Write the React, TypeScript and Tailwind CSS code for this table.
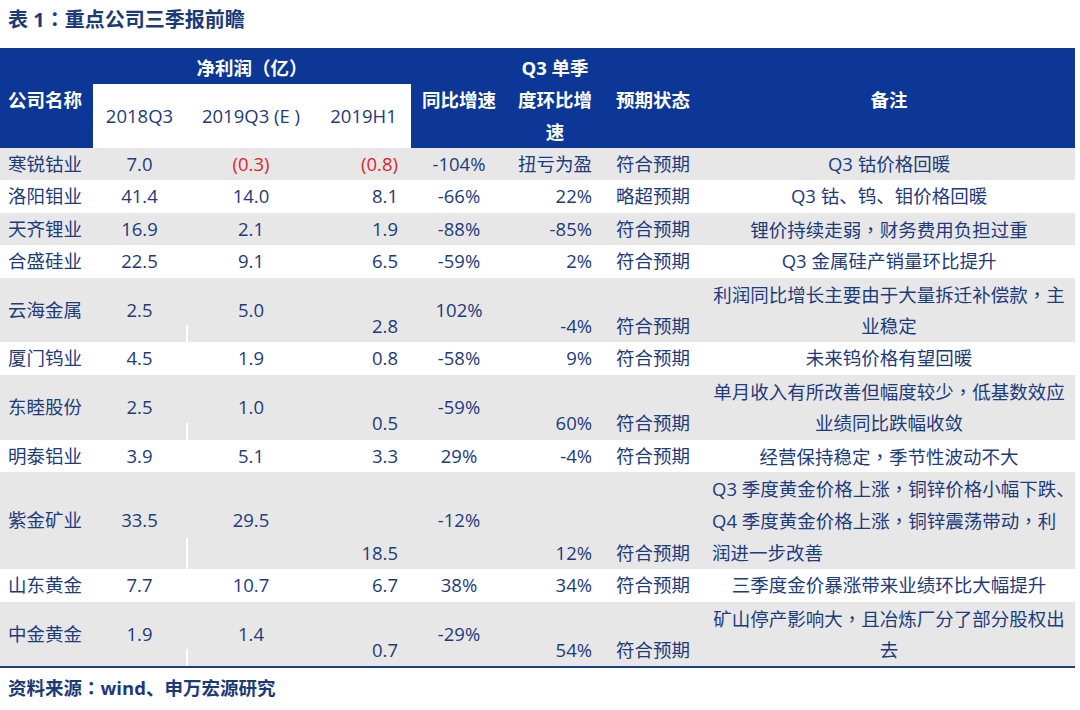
type Row = {
  name: string;
  a: string;
  b: string;
  c: string;
  yoy: string;
  qoq: string;
  status: string;
  remark: string[];
  lines: number;
  red?: boolean;
  left?: boolean;
};

const rows: Row[] = [
  { name: "寒锐钴业", a: "7.0", b: "(0.3)", c: "(0.8)", yoy: "-104%", qoq: "扭亏为盈", status: "符合预期", remark: ["Q3 钴价格回暖"], lines: 1, red: true },
  { name: "洛阳钼业", a: "41.4", b: "14.0", c: "8.1", yoy: "-66%", qoq: "22%", status: "略超预期", remark: ["Q3 钴、钨、钼价格回暖"], lines: 1 },
  { name: "天齐锂业", a: "16.9", b: "2.1", c: "1.9", yoy: "-88%", qoq: "-85%", status: "符合预期", remark: ["锂价持续走弱，财务费用负担过重"], lines: 1 },
  { name: "合盛硅业", a: "22.5", b: "9.1", c: "6.5", yoy: "-59%", qoq: "2%", status: "符合预期", remark: ["Q3 金属硅产销量环比提升"], lines: 1 },
  { name: "云海金属", a: "2.5", b: "5.0", c: "2.8", yoy: "102%", qoq: "-4%", status: "符合预期", remark: ["利润同比增长主要由于大量拆迁补偿款，主", "业稳定"], lines: 2 },
  { name: "厦门钨业", a: "4.5", b: "1.9", c: "0.8", yoy: "-58%", qoq: "9%", status: "符合预期", remark: ["未来钨价格有望回暖"], lines: 1 },
  { name: "东睦股份", a: "2.5", b: "1.0", c: "0.5", yoy: "-59%", qoq: "60%", status: "符合预期", remark: ["单月收入有所改善但幅度较少，低基数效应", "业绩同比跌幅收敛"], lines: 2 },
  { name: "明泰铝业", a: "3.9", b: "5.1", c: "3.3", yoy: "29%", qoq: "-4%", status: "符合预期", remark: ["经营保持稳定，季节性波动不大"], lines: 1 },
  { name: "紫金矿业", a: "33.5", b: "29.5", c: "18.5", yoy: "-12%", qoq: "12%", status: "符合预期", remark: ["Q3 季度黄金价格上涨，铜锌价格小幅下跌、", "Q4 季度黄金价格上涨，铜锌震荡带动，利", "润进一步改善"], lines: 3, left: true },
  { name: "山东黄金", a: "7.7", b: "10.7", c: "6.7", yoy: "38%", qoq: "34%", status: "符合预期", remark: ["三季度金价暴涨带来业绩环比大幅提升"], lines: 1 },
  { name: "中金黄金", a: "1.9", b: "1.4", c: "0.7", yoy: "-29%", qoq: "54%", status: "符合预期", remark: ["矿山停产影响大，且冶炼厂分了部分股权出", "去"], lines: 2 },
];

const heights: Record<number, string> = {
  1: "h-[32.4px]",
  2: "h-[64.8px]",
  3: "h-[97.2px]",
};

// full-width comma / colon drawn centred in their box, like the source document
const Punct = ({ text }: { text: string }) => (
  <>
    {text.split(/([，：])/).map((part, i) =>
      part === "，" || part === "：" ? (
        <span key={i} className="font-['Noto_Sans_CJK_TC',sans-serif]">
          {part}
        </span>
      ) : (
        part
      )
    )}
  </>
);

export default function App() {
  return (
    <div className="w-[1080px] h-[710px] bg-white text-[#1d3b7d] font-['Open_Sans','Noto_Sans_CJK_SC',sans-serif] text-[18.5px]">
      <div className="h-[48px] pl-2 pt-[6px] font-bold text-[20px] text-[#1b3a7a]">
        <div className="h-[26px] leading-[26px] whitespace-nowrap">
          <Punct text="表 1：重点公司三季报前瞻" />
        </div>
      </div>

      <table className="w-[1075px] table-fixed border-collapse border-b-2 border-[#1d3f84]">
        <colgroup>
          <col className="w-[93px]" />
          <col className="w-[93px]" />
          <col className="w-[130px]" />
          <col className="w-[95px]" />
          <col className="w-[96px]" />
          <col className="w-[96px]" />
          <col className="w-[100px]" />
          <col className="w-[372px]" />
        </colgroup>
        <thead className="bg-[#0c3796] text-white font-bold">
          <tr className="h-[36px]">
            <th rowSpan={2} className="pl-2 pt-1 text-left align-middle font-bold whitespace-nowrap">
              公司名称
            </th>
            <th colSpan={3} className="pt-1 text-center align-middle font-bold">
              净利润（亿）
            </th>
            <th rowSpan={2} className="pt-1 text-center align-middle font-bold whitespace-nowrap">
              同比增速
            </th>
            <th rowSpan={2} className="pt-1 text-center align-top font-bold leading-[32px] whitespace-nowrap">
              Q3 单季
              <br />
              度环比增
              <br />
              速
            </th>
            <th rowSpan={2} className="pt-1 text-center align-middle font-bold whitespace-nowrap">
              预期状态
            </th>
            <th rowSpan={2} className="pt-1 text-center align-middle font-bold">
              备注
            </th>
          </tr>
          <tr className="h-[64px]">
            <td className="bg-white text-[#1d3b7d] font-normal text-center align-middle">2018Q3</td>
            <td className="bg-white text-[#1d3b7d] font-normal text-center align-middle whitespace-nowrap">2019Q3 (E )</td>
            <td className="bg-white text-[#1d3b7d] font-normal text-center align-middle">2019H1</td>
          </tr>
        </thead>
        <tbody className="leading-[32.4px]">
          {rows.map((r, i) => (
            <tr key={r.name} className={`${heights[r.lines]} ${i % 2 === 0 ? "bg-[#e7e7e7]" : "bg-white"}`}>
              <td className="pl-2 align-middle whitespace-nowrap">{r.name}</td>
              <td className="text-center align-middle">{r.a}</td>
              <td className={`relative text-center align-middle ${r.red ? "text-[#e0252b]" : ""}`}>
                {r.b}
                {r.lines > 1 && (
                  <span
                    className={`absolute left-0 bottom-0 w-[1.5px] bg-white ${r.lines === 3 ? "h-[31px]" : "h-[17px]"}`}
                  />
                )}
              </td>
              <td className={`pr-[13px] text-right align-bottom ${r.red ? "text-[#e0252b]" : ""}`}>{r.c}</td>
              <td className="text-center align-middle">{r.yoy}</td>
              <td className="pr-[11px] text-right align-bottom whitespace-nowrap">{r.qoq}</td>
              <td className="text-center align-bottom whitespace-nowrap">{r.status}</td>
              <td className={`align-middle ${r.left ? "pl-[9px] text-left" : "text-center"}`}>
                {r.remark.map((line) => (
                  <div key={line} className="h-[32.4px] whitespace-nowrap">
                    <Punct text={line} />
                  </div>
                ))}
              </td>
            </tr>
          ))}
        </tbody>
      </table>

      <div className="h-[36px] pl-2 pt-[1px] leading-[36px] font-bold text-[18.5px] text-[#1b3a7a] whitespace-nowrap">
        <Punct text="资料来源：wind、申万宏源研究" />
      </div>
    </div>
  );
}
